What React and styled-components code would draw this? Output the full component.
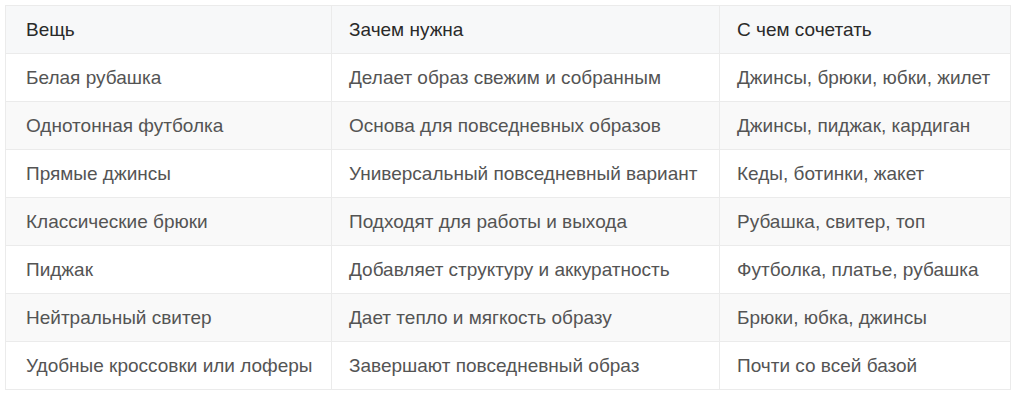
import styled, { createGlobalStyle } from "styled-components";

const GlobalStyle = createGlobalStyle`
  body {
    margin: 0;
    background: #ffffff;
    font-family: "Liberation Sans", Arial, sans-serif;
  }
`;

const Wrapper = styled.div`
  padding: 5px 4px 0 5px;
`;

const Table = styled.table`
  width: 1005px;
  table-layout: fixed;
  border-collapse: collapse;
  border: 1px solid #ebebeb;
  font-size: 19px;
`;

const HeadCell = styled.th`
  box-sizing: border-box;
  height: 48px;
  padding: 0 ${(p) => p.$pad}px;
  text-align: left;
  font-weight: normal;
  color: #2a2a2a;
  background: #f7f8f9;
  border: 1px solid #ebebeb;
  width: ${(p) => p.$width}px;
  white-space: nowrap;
`;

const Row = styled.tr`
  background: ${(p) => (p.$striped ? "#f9f9f9" : "#ffffff")};
`;

const Cell = styled.td`
  box-sizing: border-box;
  height: 48px;
  padding: 0 ${(p) => p.$pad}px;
  color: #545454;
  border: 1px solid #ebebeb;
  white-space: nowrap;
`;

const columns = [
  { title: "Вещь", width: 326, pad: 20 },
  { title: "Зачем нужна", width: 388, pad: 17 },
  { title: "С чем сочетать", width: 291, pad: 17 },
];

const rows = [
  ["Белая рубашка", "Делает образ свежим и собранным", "Джинсы, брюки, юбки, жилет"],
  ["Однотонная футболка", "Основа для повседневных образов", "Джинсы, пиджак, кардиган"],
  ["Прямые джинсы", "Универсальный повседневный вариант", "Кеды, ботинки, жакет"],
  ["Классические брюки", "Подходят для работы и выхода", "Рубашка, свитер, топ"],
  ["Пиджак", "Добавляет структуру и аккуратность", "Футболка, платье, рубашка"],
  ["Нейтральный свитер", "Дает тепло и мягкость образу", "Брюки, юбка, джинсы"],
  ["Удобные кроссовки или лоферы", "Завершают повседневный образ", "Почти со всей базой"],
];

export default function App() {
  return (
    <>
      <GlobalStyle />
      <Wrapper>
        <Table>
          <thead>
            <tr>
              {columns.map((c) => (
                <HeadCell key={c.title} $width={c.width} $pad={c.pad}>
                  {c.title}
                </HeadCell>
              ))}
            </tr>
          </thead>
          <tbody>
            {rows.map((r, i) => (
              <Row key={r[0]} $striped={i % 2 === 1}>
                {r.map((v, j) => (
                  <Cell key={v} $pad={columns[j].pad}>
                    {v}
                  </Cell>
                ))}
              </Row>
            ))}
          </tbody>
        </Table>
      </Wrapper>
    </>
  );
}
